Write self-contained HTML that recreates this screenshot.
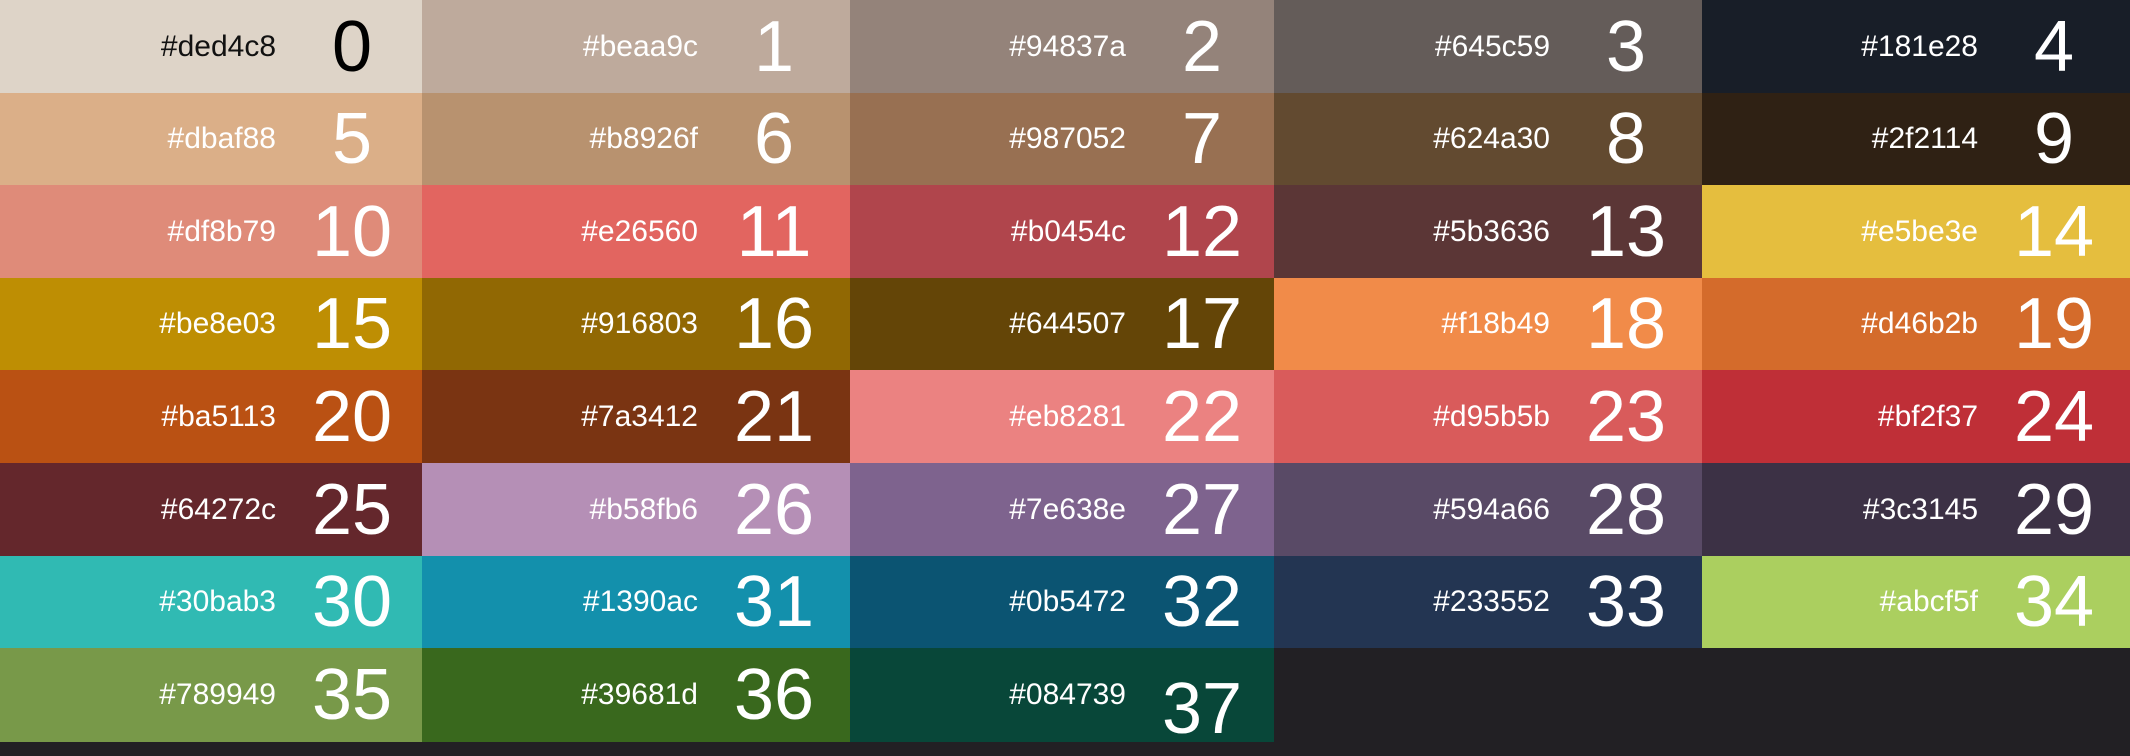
<!DOCTYPE html>
<html><head><meta charset="utf-8"><style>
html,body{margin:0;padding:0;width:2130px;height:746px;background:#222024;overflow:hidden}
.c{position:absolute}
.h{position:absolute;right:calc(100% - 276px);top:0;height:100%;display:flex;align-items:center;font:30px "Liberation Sans",sans-serif;color:#fff;white-space:nowrap}
.n{position:absolute;left:352px;top:0;height:100%;transform:translateX(-50%);display:flex;align-items:center;font:72px "Liberation Sans",sans-serif;color:#fff;white-space:nowrap}
.a{left:0;width:422px}.b{left:422px;width:428px}.d{left:850px;width:424px}.e{left:1274px;width:428px}.f{left:1702px;width:428px}
.r0{top:0;height:93px}.r1{top:93px;height:92px}.r2{top:185px;height:93px}.r3{top:278px;height:92px}
.r4{top:370px;height:93px}.r5{top:463px;height:93px}.r6{top:556px;height:92px}.r7{top:648px;height:94px}
</style></head><body>
<div class="c a r0" style="background:#ded4c8"><div class="h" style="color:#111">#ded4c8</div><div class="n" style="color:#000">0</div></div>
<div class="c b r0" style="background:#beaa9c"><div class="h">#beaa9c</div><div class="n">1</div></div>
<div class="c d r0" style="background:#94837a"><div class="h">#94837a</div><div class="n">2</div></div>
<div class="c e r0" style="background:#645c59"><div class="h">#645c59</div><div class="n">3</div></div>
<div class="c f r0" style="background:#181e28"><div class="h">#181e28</div><div class="n">4</div></div>

<div class="c a r1" style="background:#dbaf88"><div class="h">#dbaf88</div><div class="n">5</div></div>
<div class="c b r1" style="background:#b8926f"><div class="h">#b8926f</div><div class="n">6</div></div>
<div class="c d r1" style="background:#987052"><div class="h">#987052</div><div class="n">7</div></div>
<div class="c e r1" style="background:#624a30"><div class="h">#624a30</div><div class="n">8</div></div>
<div class="c f r1" style="background:#2f2114"><div class="h">#2f2114</div><div class="n">9</div></div>

<div class="c a r2" style="background:#df8b79"><div class="h">#df8b79</div><div class="n">10</div></div>
<div class="c b r2" style="background:#e26560"><div class="h">#e26560</div><div class="n">11</div></div>
<div class="c d r2" style="background:#b0454c"><div class="h">#b0454c</div><div class="n">12</div></div>
<div class="c e r2" style="background:#5b3636"><div class="h">#5b3636</div><div class="n">13</div></div>
<div class="c f r2" style="background:#e5be3e"><div class="h">#e5be3e</div><div class="n">14</div></div>

<div class="c a r3" style="background:#be8e03"><div class="h">#be8e03</div><div class="n">15</div></div>
<div class="c b r3" style="background:#916803"><div class="h">#916803</div><div class="n">16</div></div>
<div class="c d r3" style="background:#644507"><div class="h">#644507</div><div class="n">17</div></div>
<div class="c e r3" style="background:#f18b49"><div class="h">#f18b49</div><div class="n">18</div></div>
<div class="c f r3" style="background:#d46b2b"><div class="h">#d46b2b</div><div class="n">19</div></div>

<div class="c a r4" style="background:#ba5113"><div class="h">#ba5113</div><div class="n">20</div></div>
<div class="c b r4" style="background:#7a3412"><div class="h">#7a3412</div><div class="n">21</div></div>
<div class="c d r4" style="background:#eb8281"><div class="h">#eb8281</div><div class="n">22</div></div>
<div class="c e r4" style="background:#d95b5b"><div class="h">#d95b5b</div><div class="n">23</div></div>
<div class="c f r4" style="background:#bf2f37"><div class="h">#bf2f37</div><div class="n">24</div></div>

<div class="c a r5" style="background:#64272c"><div class="h">#64272c</div><div class="n">25</div></div>
<div class="c b r5" style="background:#b58fb6"><div class="h">#b58fb6</div><div class="n">26</div></div>
<div class="c d r5" style="background:#7e638e"><div class="h">#7e638e</div><div class="n">27</div></div>
<div class="c e r5" style="background:#594a66"><div class="h">#594a66</div><div class="n">28</div></div>
<div class="c f r5" style="background:#3c3145"><div class="h">#3c3145</div><div class="n">29</div></div>

<div class="c a r6" style="background:#30bab3"><div class="h">#30bab3</div><div class="n">30</div></div>
<div class="c b r6" style="background:#1390ac"><div class="h">#1390ac</div><div class="n">31</div></div>
<div class="c d r6" style="background:#0b5472"><div class="h">#0b5472</div><div class="n">32</div></div>
<div class="c e r6" style="background:#233552"><div class="h">#233552</div><div class="n">33</div></div>
<div class="c f r6" style="background:#abcf5f"><div class="h">#abcf5f</div><div class="n">34</div></div>

<div class="c a r7" style="background:#789949"><div class="h">#789949</div><div class="n">35</div></div>
<div class="c b r7" style="background:#39681d"><div class="h">#39681d</div><div class="n">36</div></div>
<div class="c d r7" style="background:#084739"><div class="h">#084739</div><div class="n" style="padding-top:14px">37</div></div>
</body></html>
